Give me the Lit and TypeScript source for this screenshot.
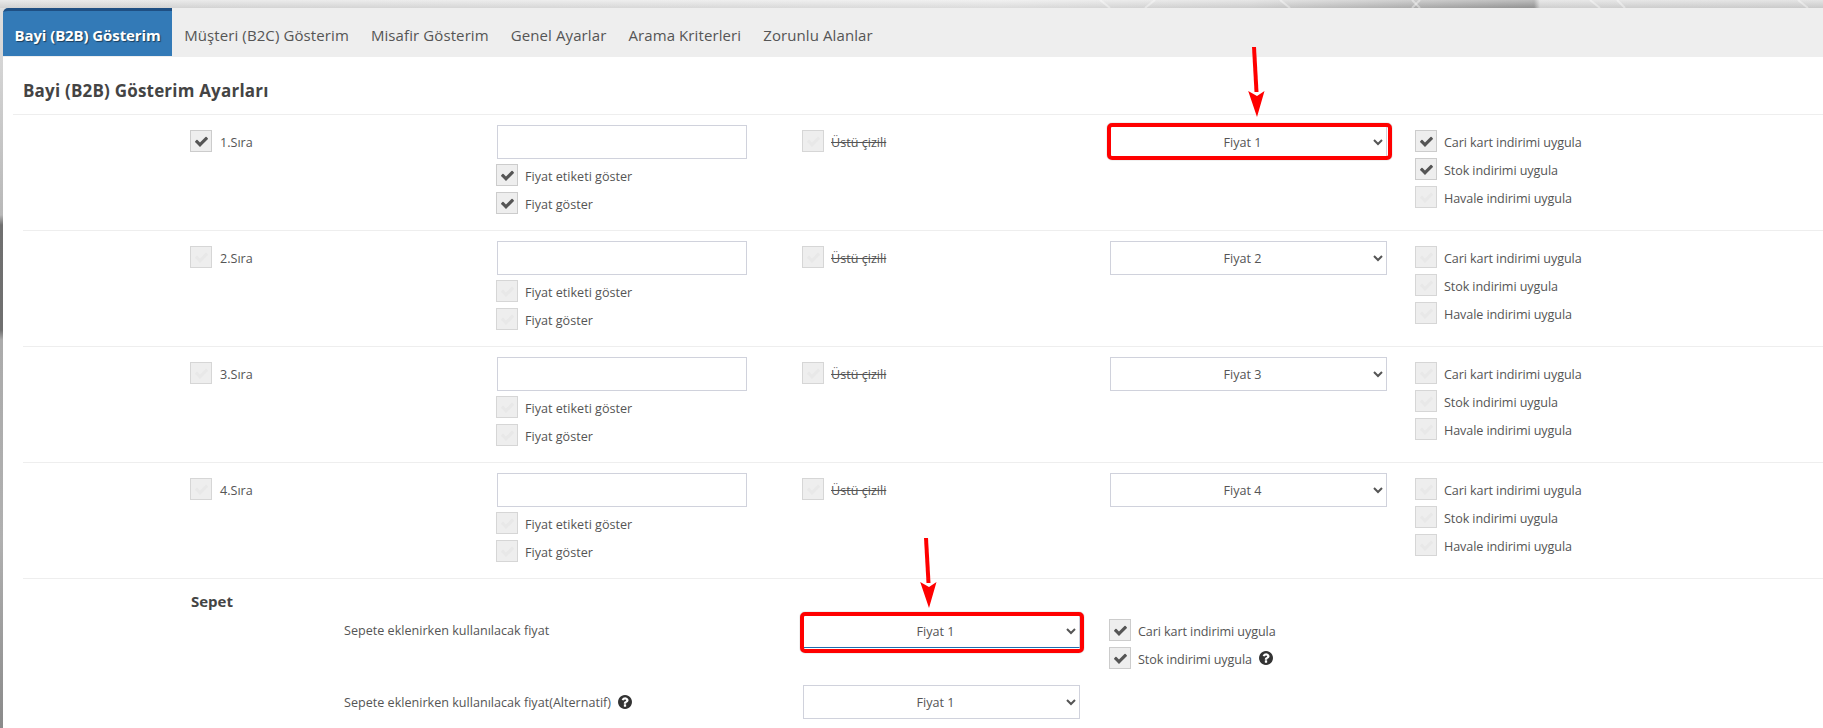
import { LitElement, html, css, svg } from "lit";
import { customElement } from "lit/decorators.js";

const CHECK = "M1671 566q0 40-28 68l-724 724-136 136q-28 28-68 28t-68-28l-136-136-362-362q-28-28-28-68t28-68l136-136q28-28 68-28t68 28l294 295 656-657q28-28 68-28t68 28l136 136q28 28 28 68z";
const HELP = "M1024 1376v-192q0-14-9-23t-23-9h-192q-14 0-23 9t-9 23v192q0 14 9 23t23 9h192q14 0 23-9t9-23zm256-672q0-88-55.5-163t-138.5-116-170-41q-243 0-371 213-15 24 8 42l132 100q7 6 19 6 16 0 25-12 53-68 86-92 34-24 86-24 48 0 85.5 26t37.5 59q0 38-20 61t-68 45q-63 28-115.5 86.5t-52.5 125.5v36q0 14 9 23t23 9h192q14 0 23-9t9-23q0-19 21.5-49.5t54.5-49.5q32-18 49-28.5t46-35 44.5-48 28-60.5 12.5-81zm384 192q0 209-103 385.5t-279.5 279.5-385.5 103-385.5-103-279.5-279.5-103-385.5 103-385.5 279.5-279.5 385.5-103 385.5 103 279.5 279.5 103 385.5z";

const TABS = ["Bayi (B2B) Gösterim", "Müşteri (B2C) Gösterim", "Misafir Gösterim", "Genel Ayarlar", "Arama Kriterleri", "Zorunlu Alanlar"];
const ROWS = [1, 2, 3, 4];
const STREAKS: [number, number][] = [[1100, 1110], [1155, 1145], [1280, 1290], [1420, 1412], [1412, 1420], [1590, 1600], [1617, 1625], [1798, 1808]];

@customElement("app-root")
export class AppRoot extends LitElement {
  static styles = css`
    :host {
      display: block;
      position: relative;
      height: 728px;
      overflow: hidden;
      padding: 8px 0 0 3px;
      box-sizing: border-box;
      font-family: "Open Sans", "Noto Sans", sans-serif;
      font-size: 12.6px;
      color: #555;
      background:
        linear-gradient(180deg, rgba(255,255,255,.35), rgba(0,0,0,.06)) 0 0 / 100% 8px no-repeat,
        linear-gradient(90deg, #dedede 0, #e9e9e9 1000px, #d9d9d9 1250px, #b9b9b9 1400px, #9a9a9a 1534px, #dcdcdc 1540px, #d6d6d6 1823px) 0 0 / 100% 8px no-repeat,
        linear-gradient(180deg, #e0e0e0 0, #b8b8b8 215px, #707070 225px, #6f6f6f 330px, #ababab 340px, #b0b0b0 540px, #8a8a8a 728px);
    }
    .streaks { position: absolute; left: 0; top: 0; }
    .panel {
      position: relative;
      background: #fff;
      height: 720px;
      border-top-left-radius: 5px;
    }
    .tabs { display: flex; height: 49px; background: #eee; border-top-left-radius: 5px; }
    .tab {
      padding: 0 11px;
      line-height: 54px;
      font-size: 15px;
      letter-spacing: .1px;
      color: #555;
      white-space: nowrap;
    }
    .tab.active {
      padding: 0 11.5px;
      margin-right: 1px;
      height: 48px;
      box-sizing: border-box;
      line-height: 49px;
      letter-spacing: -.1px;
      background: #337ab7;
      border-top: 3px solid #1f4f83;
      border-top-left-radius: 5px;
      color: #fff;
      font-weight: 700;
      text-shadow: 1px 1px 1px rgba(0,0,0,.5);
    }
    .title {
      margin: 0 0 0 10px;
      height: 58px;
      padding: 0 0 0 10px;
      box-sizing: border-box;
      border-bottom: 1px solid #eee;
      font-size: 17px;
      letter-spacing: .2px;
      font-weight: 700;
      line-height: 68px;
      color: #444;
    }
    .row {
      margin-left: 20px;
      height: 116px;
      box-sizing: border-box;
      padding: 10px 0 0 167px;
      border-bottom: 1px solid #eee;
      display: grid;
      grid-template-columns: 307px 305px 308px 305px 1fr;
      align-items: start;
    }
    .stack { display: flex; flex-direction: column; gap: 6px; }
    .pad { padding-top: 5px; }
    .mt5 { margin-top: 5px; margin-left: -1px; }
    .ck { display: flex; align-items: center; gap: 7px; height: 22px; white-space: nowrap; }
    .ck > span:not(.box) { padding-top: 2px; }
    .ck.wide { gap: 8px; }
    .tight { letter-spacing: -.1px; }
    .box {
      width: 22px;
      height: 22px;
      box-sizing: border-box;
      flex: none;
      border: 1px solid #ccc;
      background: #eee;
      display: flex;
      align-items: center;
      justify-content: center;
    }
    .box svg { width: 15px; height: 15px; fill: #555; }
    .box.off { border-color: #d6d6d6; }
    .box.off svg { fill: #e8e8e8; }
    .strike { text-decoration: line-through; }
    .field {
      width: 250px;
      height: 34px;
      box-sizing: border-box;
      border: 1px solid #d0d2dc;
      background: #fff;
      display: block;
      padding: 0;
      margin: 0;
    }
    .sel { position: relative; width: 277px; height: 34px; }
    select {
      width: 277px;
      height: 34px;
      box-sizing: border-box;
      border: 1px solid #d0d2dc;
      border-radius: 0;
      background: #fff;
      color: #555;
      font: 12.6px "Open Sans", "Noto Sans", sans-serif;
      text-align: center;
      outline: none;
      padding: 0;
      display: block;
    }
    select.focus { border-bottom-color: #1f6cb0; }
    .mark {
      position: absolute;
      box-sizing: border-box;
      border: 4px solid #f00;
      border-radius: 5px;
      box-shadow: 0 0 1px rgba(0,0,0,.6);
      pointer-events: none;
    }
    .mark.a { left: -3px; top: -2px; width: 285px; height: 37px; }
    .mark.b { left: -3px; top: -2px; width: 284px; height: 41px; }
    .arrow { position: absolute; width: 24px; height: 72px; overflow: visible; pointer-events: none; }
    .arrow.a { left: 134px; top: -79px; }
    .arrow.b { left: 113px; top: -77px; }
    .sepet { margin-left: 20px; }
    .sepet h4 {
      margin: 0;
      height: 35px;
      padding-left: 168px;
      box-sizing: border-box;
      font-size: 15px;
      font-weight: 700;
      line-height: 44px;
      color: #444;
    }
    .srow {
      height: 71px;
      padding-left: 321px;
      display: grid;
      grid-template-columns: 459px 306px 1fr;
      align-items: start;
    }
    .lbl { display: flex; align-items: center; gap: 7px; white-space: nowrap; height: 32px; }
    .help { width: 14px; height: 14px; fill: #333; flex: none; }
    .srow + .srow .lbl { height: 34px; }
  `;

  private box(on: boolean) {
    return html`<span class="box ${on ? "" : "off"}"><svg viewBox="0 0 1792 1792"><path d=${CHECK}></path></svg></span>`;
  }

  private ck(label: string, on: boolean, extra: unknown = null, cls = "", rowCls = "") {
    return html`<div class="ck ${rowCls}">${this.box(on)}<span class=${cls}>${label}</span>${extra}</div>`;
  }

  private help() {
    return html`<svg class="help" viewBox="128 128 1536 1536"><path d=${HELP}></path></svg>`;
  }

  private arrow(cls: string) {
    return html`<svg class="arrow ${cls}" viewBox="0 0 24 72">
      ${svg`<path d="M10 1 L12.5 46" stroke="#f00" stroke-width="4" fill="none"></path>
      <path d="M4.2 45 L13 50 L20.5 45 L13 71 Z" fill="#f00"></path>`}
    </svg>`;
  }

  private row(n: number) {
    const first = n === 1;
    return html`<div class="row">
      <div class="pad">${this.ck(`${n}.Sıra`, first, null, "", "wide")}</div>
      <div>
        <input class="field" type="text" />
        <div class="stack mt5">
          ${this.ck("Fiyat etiketi göster", first)}
          ${this.ck("Fiyat göster", first)}
        </div>
      </div>
      <div class="pad">${this.ck("Üstü çizili", false, null, "strike")}</div>
      <div class="sel">
        <select><option>Fiyat ${n}</option></select>
        ${first ? html`<div class="mark a"></div>${this.arrow("a")}` : null}
      </div>
      <div class="stack pad">
        ${this.ck("Cari kart indirimi uygula", first, null, "tight")}
        ${this.ck("Stok indirimi uygula", first, null, "tight")}
        ${this.ck("Havale indirimi uygula", false, null, "tight")}
      </div>
    </div>`;
  }

  render() {
    return html`
      <svg class="streaks" width="1823" height="8">
        ${STREAKS.map(([a, b]) => svg`<line x1=${a} y1="0" x2=${b} y2="8" stroke="#fff" stroke-opacity=".4" stroke-width="2"></line>`)}
      </svg>
      <div class="panel">
        <div class="tabs">
          ${TABS.map((t, i) => html`<div class="tab ${i === 0 ? "active" : ""}">${t}</div>`)}
        </div>
        <div class="title">Bayi (B2B) Gösterim Ayarları</div>
        ${ROWS.map((n) => this.row(n))}
        <div class="sepet">
          <h4>Sepet</h4>
          <div class="srow">
            <div class="lbl">Sepete eklenirken kullanılacak fiyat</div>
            <div class="sel">
              <select class="focus"><option>Fiyat 1</option></select>
              <div class="mark b"></div>
              ${this.arrow("b")}
            </div>
            <div class="stack pad">
              ${this.ck("Cari kart indirimi uygula", true, null, "tight")}
              ${this.ck("Stok indirimi uygula", true, this.help(), "tight")}
            </div>
          </div>
          <div class="srow">
            <div class="lbl">Sepete eklenirken kullanılacak fiyat(Alternatif) ${this.help()}</div>
            <div class="sel"><select><option>Fiyat 1</option></select></div>
          </div>
        </div>
      </div>
    `;
  }
}
